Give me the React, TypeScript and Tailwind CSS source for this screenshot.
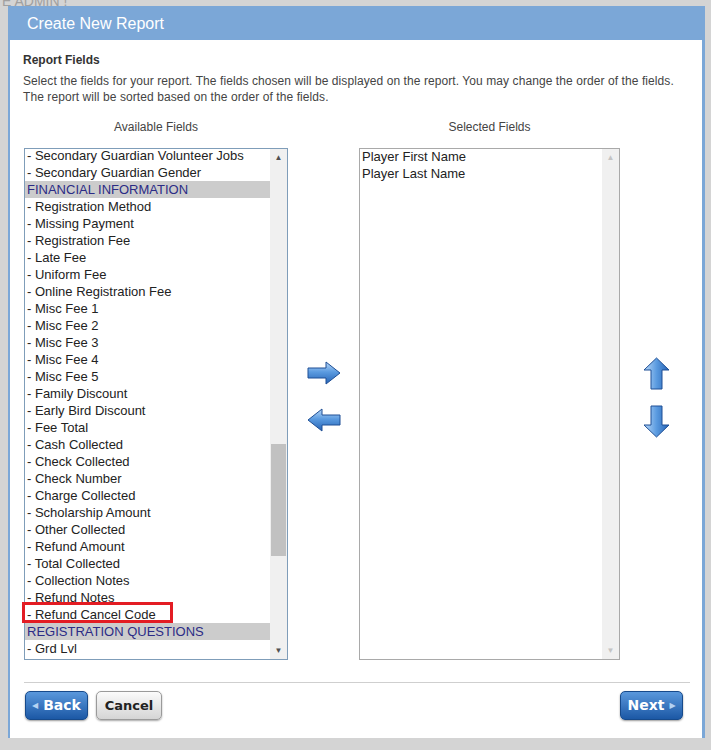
import React from "react";

type Field = { label: string; group?: boolean };

const availableFields: Field[] = [
  { label: "- Secondary Guardian Volunteer Jobs" },
  { label: "- Secondary Guardian Gender" },
  { label: "FINANCIAL INFORMATION", group: true },
  { label: "- Registration Method" },
  { label: "- Missing Payment" },
  { label: "- Registration Fee" },
  { label: "- Late Fee" },
  { label: "- Uniform Fee" },
  { label: "- Online Registration Fee" },
  { label: "- Misc Fee 1" },
  { label: "- Misc Fee 2" },
  { label: "- Misc Fee 3" },
  { label: "- Misc Fee 4" },
  { label: "- Misc Fee 5" },
  { label: "- Family Discount" },
  { label: "- Early Bird Discount" },
  { label: "- Fee Total" },
  { label: "- Cash Collected" },
  { label: "- Check Collected" },
  { label: "- Check Number" },
  { label: "- Charge Collected" },
  { label: "- Scholarship Amount" },
  { label: "- Other Collected" },
  { label: "- Refund Amount" },
  { label: "- Total Collected" },
  { label: "- Collection Notes" },
  { label: "- Refund Notes" },
  { label: "- Refund Cancel Code" },
  { label: "REGISTRATION QUESTIONS", group: true },
  { label: "- Grd Lvl" },
];

const selectedFields = ["Player First Name", "Player Last Name"];

function ArrowDefs({ id }: { id: string }) {
  return (
    <defs>
      <linearGradient id={id} x1="0" y1="0" x2="0" y2="1">
        <stop offset="0" stopColor="#b9d8f8" />
        <stop offset="0.45" stopColor="#5b9be0" />
        <stop offset="1" stopColor="#2563b5" />
      </linearGradient>
    </defs>
  );
}

function ArrowRight() {
  return (
    <svg width="34" height="24" viewBox="0 0 34 24">
      <ArrowDefs id="gr" />
      <path d="M1 7 H19 V1 L33 12 L19 23 V17 H1 Z" fill="url(#gr)" stroke="#1f4f95" strokeWidth="1" strokeLinejoin="round" />
    </svg>
  );
}

function ArrowLeft() {
  return (
    <svg width="34" height="24" viewBox="0 0 34 24">
      <ArrowDefs id="gl" />
      <path d="M33 7 H15 V1 L1 12 L15 23 V17 H33 Z" fill="url(#gl)" stroke="#1f4f95" strokeWidth="1" strokeLinejoin="round" />
    </svg>
  );
}

function ArrowUp() {
  return (
    <svg width="27" height="33" viewBox="0 0 27 33">
      <defs>
        <linearGradient id="gu" x1="0" y1="0" x2="1" y2="0">
          <stop offset="0" stopColor="#b9d8f8" />
          <stop offset="0.5" stopColor="#5b9be0" />
          <stop offset="1" stopColor="#2563b5" />
        </linearGradient>
      </defs>
      <path d="M8 32 V13 H1 L13.5 1 L26 13 H19 V32 Z" fill="url(#gu)" stroke="#1f4f95" strokeWidth="1" strokeLinejoin="round" />
    </svg>
  );
}

function ArrowDown() {
  return (
    <svg width="27" height="33" viewBox="0 0 27 33">
      <defs>
        <linearGradient id="gd" x1="0" y1="0" x2="1" y2="0">
          <stop offset="0" stopColor="#b9d8f8" />
          <stop offset="0.5" stopColor="#5b9be0" />
          <stop offset="1" stopColor="#2563b5" />
        </linearGradient>
      </defs>
      <path d="M8 1 V20 H1 L13.5 32 L26 20 H19 V1 Z" fill="url(#gd)" stroke="#1f4f95" strokeWidth="1" strokeLinejoin="round" />
    </svg>
  );
}

function Scrollbar({ disabled }: { disabled?: boolean }) {
  const arrow = disabled ? "text-[#c4c4c4]" : "text-[#505050]";
  return (
    <div className="w-[17px] shrink-0 bg-[#f0f0f0] flex flex-col items-center">
      <div className={`h-[17px] flex items-center justify-center text-[8px] ${arrow}`}>▲</div>
      <div className="flex-1 w-full px-[1px]">
        {!disabled && <div className="mt-[278px] h-[112px] bg-[#c1c1c1]" />}
      </div>
      <div className={`h-[17px] flex items-center justify-center text-[8px] ${arrow}`}>▼</div>
    </div>
  );
}

export default function App() {
  return (
    <div className="w-[711px] h-[750px] bg-[#d4d4d4] overflow-hidden font-['Liberation_Sans',Arial,sans-serif]">
      <div className="h-[6px] overflow-hidden pl-[2px]">
        <div className="-mt-[9px] text-[14px] text-[#a0a0a0]">E ADMIN !</div>
      </div>
      <div className="pl-2">
        {/* Dialog */}
        <div className="w-[697px] bg-[#7ba7d7]">
          <div className="h-[34px] pl-[19px] pt-[2px] flex items-center text-white text-[16px]">Create New Report</div>
          <div className="ml-[2px] mr-[3px] mb-[4px] h-[698px] bg-white pt-[13px] pl-[13px] pr-[12px] text-[#333]">
            <div className="text-[12px] leading-[15px] font-bold text-[#333]">Report Fields</div>
            <p className="mt-[5px] text-[12px] leading-[16px] text-[#444] tracking-[0.08px]">
              Select the fields for your report. The fields chosen will be displayed on the report. You may change the order of the fields.
              <br />
              The report will be sorted based on the order of the fields.
            </p>

            <div className="mt-[14px] flex pl-[1px]">
              {/* Available */}
              <div className="w-[264px] shrink-0">
                <div className="text-center text-[12px] leading-[16px] text-[#444]">Available Fields</div>
                <div className="relative mt-[13px]">
                  <div className="h-[512px] border border-[#7f9db9] flex overflow-hidden">
                    <div className="flex-1 overflow-hidden text-[13px] leading-[17px] text-[#222]">
                      <div className="-mt-[2px]">
                        {availableFields.map((f, i) =>
                          f.group ? (
                            <div key={i} className="h-[17px] bg-[#cccccc] pl-[2px] text-[#2b2b86] whitespace-nowrap">
                              {f.label}
                            </div>
                          ) : (
                            <div key={i} className="h-[17px] pl-[2px] whitespace-nowrap">
                              {f.label}
                            </div>
                          )
                        )}
                      </div>
                    </div>
                    <Scrollbar />
                  </div>
                  {/* highlight */}
                  <div className="absolute left-[-2px] top-[454px] w-[151px] h-[21px] border-[3px] border-[#e31c23]" />
                </div>
              </div>

              {/* Move arrows */}
              <div className="w-[71px] shrink-0 flex flex-col items-center pt-[242px] gap-[23px]">
                <ArrowRight />
                <ArrowLeft />
              </div>

              {/* Selected */}
              <div className="w-[261px] shrink-0">
                <div className="text-center text-[12px] leading-[16px] text-[#444]">Selected Fields</div>
                <div className="mt-[13px] h-[512px] border border-[#a9a9a9] flex overflow-hidden">
                  <div className="flex-1 -mt-[1px] pl-[2px] text-[13px] leading-[17px] text-[#222]">
                    {selectedFields.map((s) => (
                      <div key={s}>{s}</div>
                    ))}
                  </div>
                  <Scrollbar disabled />
                </div>
              </div>

              {/* Order arrows */}
              <div className="flex-1 flex flex-col items-center pt-[238px] gap-[15px] pl-[2px]">
                <ArrowUp />
                <ArrowDown />
              </div>
            </div>

            <div className="mt-[22px] ml-[1px] h-px bg-[#cfcfcf]" />

            <div className="mt-[8px] ml-[2px] mr-[7px] flex justify-between font-['DejaVu_Sans',Verdana,sans-serif]">
              <div className="flex gap-[8px]">
                <button className="w-[63px] h-[29px] rounded-[5px] border border-[#174a8b] bg-gradient-to-b from-[#5a98dc] to-[#1b58a5] shadow-[0_1px_2px_rgba(0,0,0,0.4)] flex items-center justify-center gap-[5px] text-white text-[14px] font-bold">
                  <span className="text-[8px] text-[#b5d2f2]">◀</span>
                  Back
                </button>
                <button className="w-[66px] h-[29px] rounded-[5px] border border-[#9a9a9a] bg-gradient-to-b from-[#fbfbfb] to-[#d5d5d5] shadow-[0_1px_2px_rgba(0,0,0,0.35)] text-[#222] text-[13px] font-bold">
                  Cancel
                </button>
              </div>
              <button className="w-[63px] h-[29px] rounded-[5px] border border-[#174a8b] bg-gradient-to-b from-[#5a98dc] to-[#1b58a5] shadow-[0_1px_2px_rgba(0,0,0,0.4)] flex items-center justify-center gap-[5px] text-white text-[14px] font-bold">
                Next
                <span className="text-[8px] text-[#b5d2f2]">▶</span>
              </button>
            </div>
          </div>
        </div>
      </div>
    </div>
  );
}
